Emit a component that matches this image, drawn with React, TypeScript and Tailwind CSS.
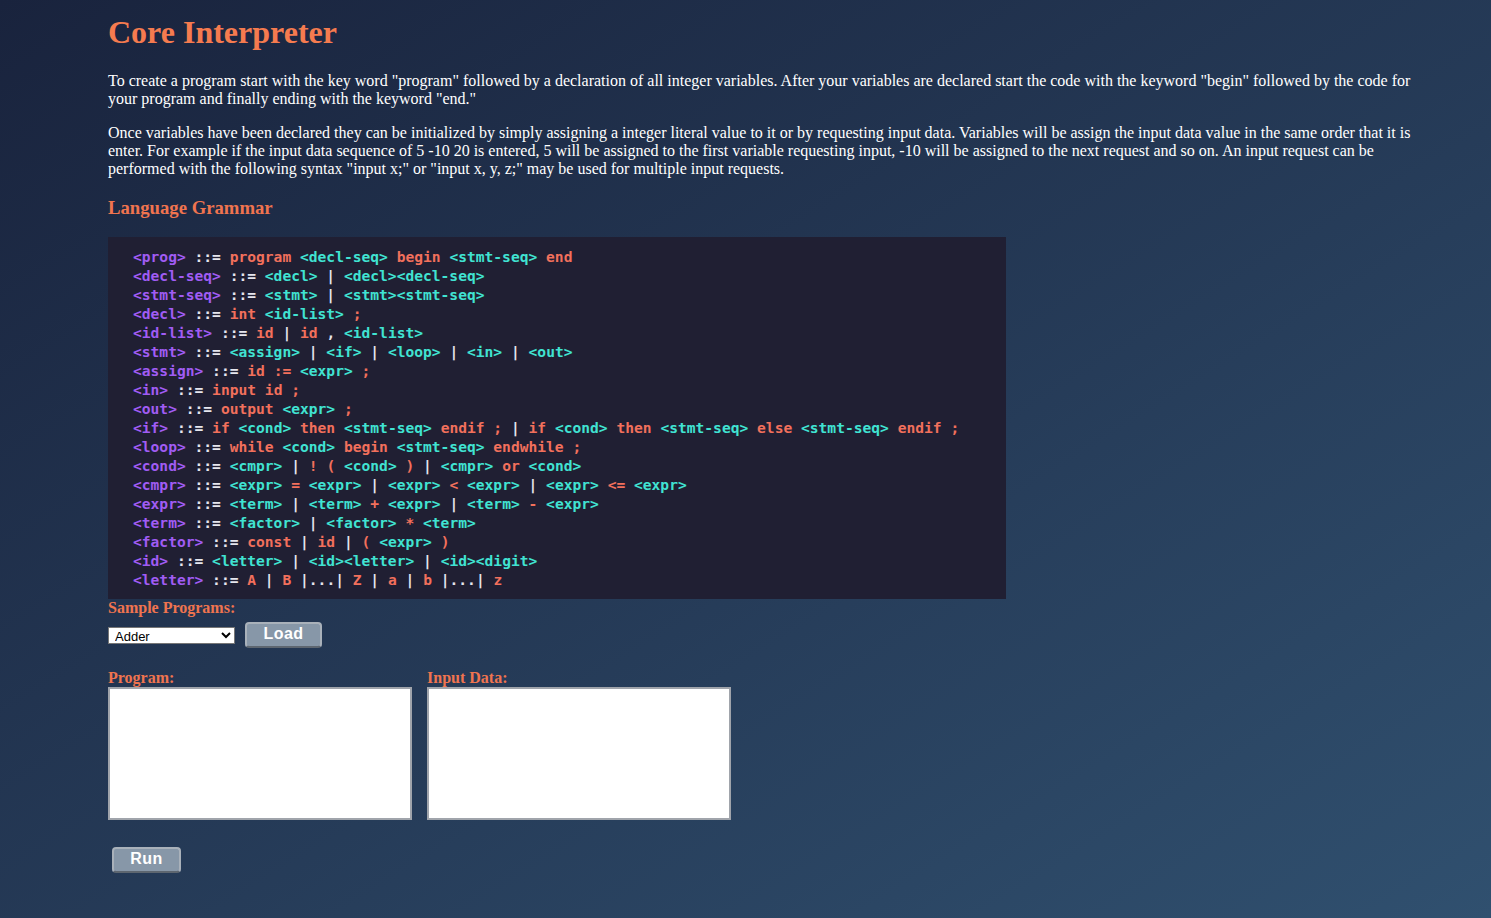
import React from "react";

const lines: string[] = [
  "<prog> ::= program <decl-seq> begin <stmt-seq> end",
  "<decl-seq> ::= <decl> | <decl><decl-seq>",
  "<stmt-seq> ::= <stmt> | <stmt><stmt-seq>",
  "<decl> ::= int <id-list> ;",
  "<id-list> ::= id | id , <id-list>",
  "<stmt> ::= <assign> | <if> | <loop> | <in> | <out>",
  "<assign> ::= id := <expr> ;",
  "<in> ::= input id ;",
  "<out> ::= output <expr> ;",
  "<if> ::= if <cond> then <stmt-seq> endif ; | if <cond> then <stmt-seq> else <stmt-seq> endif ;",
  "<loop> ::= while <cond> begin <stmt-seq> endwhile ;",
  "<cond> ::= <cmpr> | ! ( <cond> ) | <cmpr> or <cond>",
  "<cmpr> ::= <expr> = <expr> | <expr> < <expr> | <expr> <= <expr>",
  "<expr> ::= <term> | <term> + <expr> | <term> - <expr>",
  "<term> ::= <factor> | <factor> * <term>",
  "<factor> ::= const | id | ( <expr> )",
  "<id> ::= <letter> | <id><letter> | <id><digit>",
  "<letter> ::= A | B |...| Z | a | b |...| z",
];

function cls(tok: string, i: number): string {
  if (i === 0) return "text-[#a05cf4]";
  if (tok === "::=" || tok === "|" || tok === "," || tok === "|...|") return "text-[#e6e6ee]";
  if (tok.startsWith("<") && tok.length > 2 && tok !== "<=") return "text-[#40e3d2]";
  return "text-[#f2705c]";
}

function CodeLine({ text }: { text: string }) {
  const toks = text.split(" ");
  return (
    <div className="whitespace-pre">
      {toks.map((t, i) => (
        <React.Fragment key={i}>
          {i > 0 ? " " : ""}
          <span className={cls(t, i)}>{t}</span>
        </React.Fragment>
      ))}
    </div>
  );
}

const btn =
  "rounded-[4px] bg-[#8797a8] border-2 border-[#a9b1ba] border-b-[#5d6670] text-white font-bold font-['Liberation_Sans',Arial,sans-serif]";

export default function App() {
  return (
    <div className="min-h-[918px] w-full bg-linear-to-br from-[#19233d] to-[#30506f] font-['Liberation_Serif','Times_New_Roman',serif] text-white">
      <div className="pl-[108px] pr-[60px] pt-[14px] pb-[40px]">
        <h1 className="text-[32px] leading-[36px] font-bold text-[#f57b4f]">Core Interpreter</h1>
        <p className="mt-[22px] text-[16px] leading-[18px]">
          To create a program start with the key word "program" followed by a declaration of all integer variables. After your variables are declared start the code with the keyword "begin" followed by the code for your program and finally ending with the keyword "end."
        </p>
        <p className="mt-[16px] text-[16px] leading-[18px]">
          Once variables have been declared they can be initialized by simply assigning a integer literal value to it or by requesting input data. Variables will be assign the input data value in the same order that it is enter. For example if the input data sequence of 5 -10 20 is entered, 5 will be assigned to the first variable requesting input, -10 will be assigned to the next request and so on. An input request can be performed with the following syntax "input x;" or "input x, y, z;" may be used for multiple input requests.
        </p>
        <h2 className="mt-[19px] text-[18.72px] leading-[22px] font-bold text-[#f0744f]">Language Grammar</h2>
        <div className="mt-[18px] w-[898px] bg-[#201f33] pl-[25px] pt-[10px] pb-[10px] font-['DejaVu_Sans_Mono',monospace] font-bold text-[14.6px] leading-[19px]">
          {lines.map((l, i) => (
            <CodeLine key={i} text={l} />
          ))}
        </div>
        <div className="text-[16px] leading-[18px] font-bold text-[#f0744f]">Sample Programs:</div>
        <div className="mt-[5px] flex items-center gap-[10px]">
          <select className="w-[127px] h-[17px] bg-white text-black text-[13px] leading-[15px] border border-[#767676] font-['Liberation_Sans',Arial,sans-serif] px-[2px]">
            <option>Adder</option>
          </select>
          <button className={btn + " w-[77px] h-[26px] text-[16px] leading-[18px] tracking-[0.5px] pb-[2px]"}>Load</button>
        </div>
        <div className="mt-[21px] flex gap-[15px]">
          <div className="flex flex-col">
            <div className="text-[16px] leading-[18px] font-bold text-[#f0744f]">Program:</div>
            <textarea className="w-[304px] h-[133px] bg-white border-2 border-[#a0a4ab] resize-none" />
          </div>
          <div className="flex flex-col">
            <div className="text-[16px] leading-[18px] font-bold text-[#f0744f]">Input Data:</div>
            <textarea className="w-[304px] h-[133px] bg-white border-2 border-[#a0a4ab] resize-none" />
          </div>
        </div>
        <div className="mt-[27px] ml-[4px]">
          <button className={btn + " w-[69px] h-[26px] text-[16px] leading-[18px] tracking-[0.5px] pb-[2px]"}>Run</button>
        </div>
      </div>
    </div>
  );
}
